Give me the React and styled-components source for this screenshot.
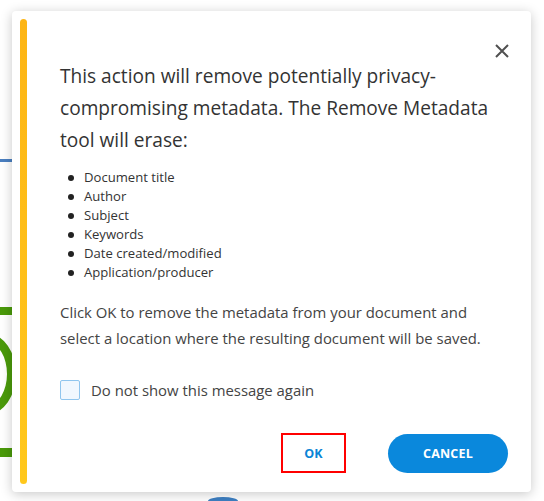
import React, { useState } from 'react';
import styled, { createGlobalStyle } from 'styled-components';

const Global = createGlobalStyle`
  html, body {
    margin: 0;
    padding: 0;
    background: #ffffff;
    font-family: "Open Sans", "Noto Sans", "Liberation Sans", sans-serif;
  }
  #root {
    position: relative;
    width: 544px;
    height: 501px;
    overflow: hidden;
  }
`;

const Backdrop = styled.div`
  position: relative;
  width: 544px;
  height: 501px;
  padding: 11px 13px 9px 12px;
  box-sizing: border-box;
`;

// slices of the page behind the dialog
const Scrap = styled.div`
  position: absolute;
  left: ${(p) => p.left}px;
  top: ${(p) => p.top}px;
  width: ${(p) => p.w}px;
  height: ${(p) => p.h}px;
  background: ${(p) => p.color};
  border-radius: ${(p) => p.radius || 0};
`;

const Ring = styled.div`
  position: absolute;
  left: -40px;
  top: 334px;
  width: 38px;
  height: 62px;
  border: 9px solid #4a9a0a;
  border-radius: 50%;
`;

const Dialog = styled.div`
  position: relative;
  z-index: 1;
  display: flex;
  width: 519px;
  height: 481px;
  background: #ffffff;
  border-radius: 4px;
  box-shadow: 0 2px 12px rgba(0, 0, 0, 0.22);
  box-sizing: border-box;
`;

const Accent = styled.div`
  flex: 0 0 7px;
  margin: 8px 0 8px 8px;
  border-radius: 4px;
  background: linear-gradient(to bottom, #fdb515, #ffc81c);
`;

const Body = styled.div`
  flex: 1;
  display: flex;
  flex-direction: column;
  padding: 49px 23px 19px 33px;
`;

const Close = styled.button`
  position: absolute;
  top: 30px;
  right: 19px;
  width: 20px;
  height: 20px;
  padding: 0;
  border: none;
  background: transparent;
  display: flex;
  align-items: center;
  justify-content: center;
  cursor: pointer;
`;

const Heading = styled.p`
  margin: 0;
  font-size: 19.1px;
  line-height: 32px;
  color: #333333;
`;

const List = styled.ul`
  margin: 12px 0 0;
  padding: 0 0 0 24px;
  list-style: none;
  font-size: 13.1px;
  line-height: 19px;
  color: #333333;
`;

const Item = styled.li`
  position: relative;
  &::before {
    content: '';
    position: absolute;
    left: -16px;
    top: 7px;
    width: 6px;
    height: 6px;
    border-radius: 50%;
    background: #222222;
  }
`;

const Note = styled.p`
  margin: 17px 0 0;
  font-size: 14.9px;
  line-height: 26px;
  color: #444444;
`;

const CheckRow = styled.label`
  display: flex;
  align-items: center;
  gap: 11px;
  margin-top: 29px;
  font-size: 14.9px;
  color: #444444;
  cursor: pointer;
`;

const Box = styled.span`
  width: 18px;
  height: 18px;
  border: 1px solid #90c6ee;
  border-radius: 2px;
  background: ${(p) => (p.checked ? '#0a88dc' : '#f1f8fe')};
`;

const Actions = styled.div`
  margin-top: auto;
  display: flex;
  justify-content: flex-end;
  align-items: center;
  gap: 42px;
`;

const Button = styled.button`
  height: ${(p) => (p.primary ? '39px' : '40px')};
  padding: 0;
  width: ${(p) => (p.primary ? '120px' : '65px')};
  border-radius: ${(p) => (p.primary ? '20px' : '0')};
  border: ${(p) => (p.primary ? 'none' : '2px solid #ff0000')};
  background: ${(p) => (p.primary ? '#0a88dc' : '#ffffff')};
  color: ${(p) => (p.primary ? '#ffffff' : '#0a84d6')};
  font-family: "Open Sans", "Noto Sans", sans-serif;
  font-weight: 700;
  font-size: 12.5px;
  letter-spacing: 0.2px;
  cursor: pointer;
`;

const items = [
  'Document title',
  'Author',
  'Subject',
  'Keywords',
  'Date created/modified',
  'Application/producer',
];

export default function App() {
  const [checked, setChecked] = useState(false);
  return (
    <>
      <Global />
      <Backdrop>
        <Scrap left={0} top={159} w={14} h={3} color="#4a7fc0" />
        <Scrap left={0} top={307} w={14} h={8} color="#4a9a0a" />
        <Ring />
        <Scrap left={0} top={448} w={14} h={9} color="#4a9a0a" />
        <Scrap left={208} top={497} w={30} h={8} color="#3d7fc2" radius="50%" />
        <Dialog>
          <Accent />
          <Body>
            <Close aria-label="Close">
              <svg width="14" height="14" viewBox="0 0 14 14">
                <path d="M1 1L13 13M13 1L1 13" stroke="#505050" strokeWidth="2" />
              </svg>
            </Close>
            <Heading>
              This action will remove potentially privacy-
              <br />
              compromising metadata. The Remove Metadata
              <br />
              tool will erase:
            </Heading>
            <List>
              {items.map((t) => (
                <Item key={t}>{t}</Item>
              ))}
            </List>
            <Note>
              Click OK to remove the metadata from your document and
              <br />
              select a location where the resulting document will be saved.
            </Note>
            <CheckRow onClick={() => setChecked(!checked)}>
              <Box checked={checked} />
              Do not show this message again
            </CheckRow>
            <Actions>
              <Button>OK</Button>
              <Button primary>CANCEL</Button>
            </Actions>
          </Body>
        </Dialog>
      </Backdrop>
    </>
  );
}
